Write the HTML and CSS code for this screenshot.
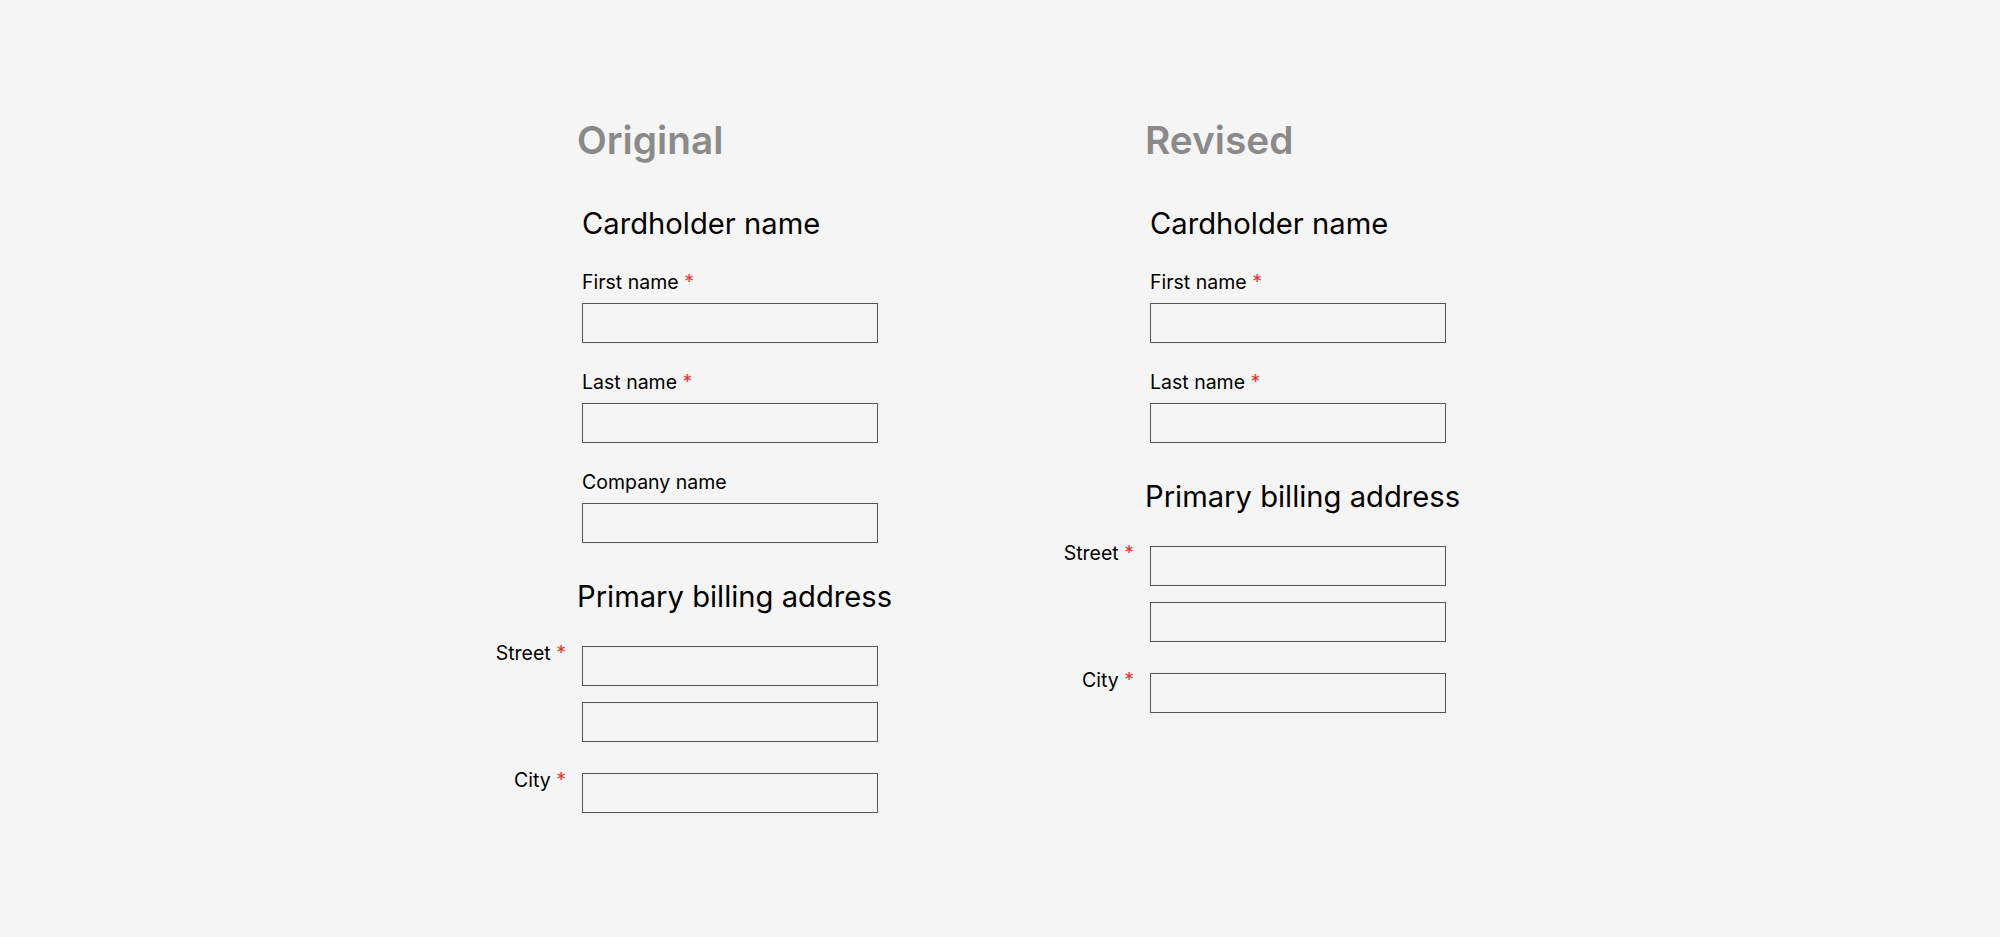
FILE: index.html
```html
<!DOCTYPE html>
<html lang="en">
<head>
<meta charset="utf-8">
<title>Form comparison</title>
<link rel="stylesheet" href="styles.css">
</head>
<body>
<main class="compare">
  <section class="variant">
    <h1 class="variant-title">Original</h1>
    <div class="group">
      <h2 class="group-title">Cardholder name</h2>
      <div class="field">
        <label class="field-label">First name <span class="req">*</span></label>
        <input class="input" type="text">
      </div>
      <div class="field">
        <label class="field-label">Last name <span class="req">*</span></label>
        <input class="input" type="text">
      </div>
      <div class="field">
        <label class="field-label">Company name</label>
        <input class="input" type="text">
      </div>
    </div>
    <div class="group">
      <h2 class="group-title billing">Primary billing address</h2>
      <div class="row">
        <label class="row-label">Street <span class="req">*</span></label>
        <div class="row-controls">
          <input class="input" type="text">
          <input class="input" type="text">
        </div>
      </div>
      <div class="row">
        <label class="row-label">City <span class="req">*</span></label>
        <div class="row-controls">
          <input class="input" type="text">
        </div>
      </div>
    </div>
  </section>

  <section class="variant">
    <h1 class="variant-title">Revised</h1>
    <div class="group">
      <h2 class="group-title">Cardholder name</h2>
      <div class="field">
        <label class="field-label">First name <span class="req">*</span></label>
        <input class="input" type="text">
      </div>
      <div class="field">
        <label class="field-label">Last name <span class="req">*</span></label>
        <input class="input" type="text">
      </div>
    </div>
    <div class="group">
      <h2 class="group-title billing">Primary billing address</h2>
      <div class="row">
        <label class="row-label">Street <span class="req">*</span></label>
        <div class="row-controls">
          <input class="input" type="text">
          <input class="input" type="text">
        </div>
      </div>
      <div class="row">
        <label class="row-label">City <span class="req">*</span></label>
        <div class="row-controls">
          <input class="input" type="text">
        </div>
      </div>
    </div>
  </section>
</main>
</body>
</html>
```

FILE: styles.css
```css
html, body {
  margin: 0;
  padding: 0;
  background: #f5f5f5;
}

body {
  font-family: Inter, "Noto Sans", "Liberation Sans", sans-serif;
  color: #000;
  width: 2000px;
  height: 937px;
  overflow: hidden;
}

.compare {
  display: flex;
  gap: 128px;
  padding: 117px 0 0 466px;
}

.variant {
  width: 440px;
  display: flex;
  flex-direction: column;
}

.variant-title {
  margin: 0 0 0 111px;
  font-size: 38.8px;
  line-height: 46px;
  font-weight: 600;
  color: #8a8a8a;
}

.group {
  display: flex;
  flex-direction: column;
}

.group-title {
  margin: 43px 0 29px 116px;
  font-size: 29.2px;
  line-height: 35px;
  font-weight: 400;
  color: #000;
}

.group-title.billing {
  margin: 9px 0 32px 111px;
}

.field {
  display: flex;
  flex-direction: column;
  margin: 0 0 27px 116px;
}

.field-label {
  font-size: 19.5px;
  line-height: 24px;
  margin-bottom: 9px;
}

.req {
  color: #ee3333;
}

.input {
  box-sizing: border-box;
  width: 296px;
  height: 40px;
  margin: 0;
  padding: 0 8px;
  border: 1px solid #555;
  border-radius: 0;
  background: transparent;
  font: inherit;
}

.row {
  display: flex;
  gap: 16px;
  margin-bottom: 31px;
}

.row-label {
  width: 100px;
  text-align: right;
  font-size: 19.5px;
  line-height: 24px;
  margin-top: -5px;
}

.row-controls {
  display: flex;
  flex-direction: column;
  gap: 16px;
}
```
